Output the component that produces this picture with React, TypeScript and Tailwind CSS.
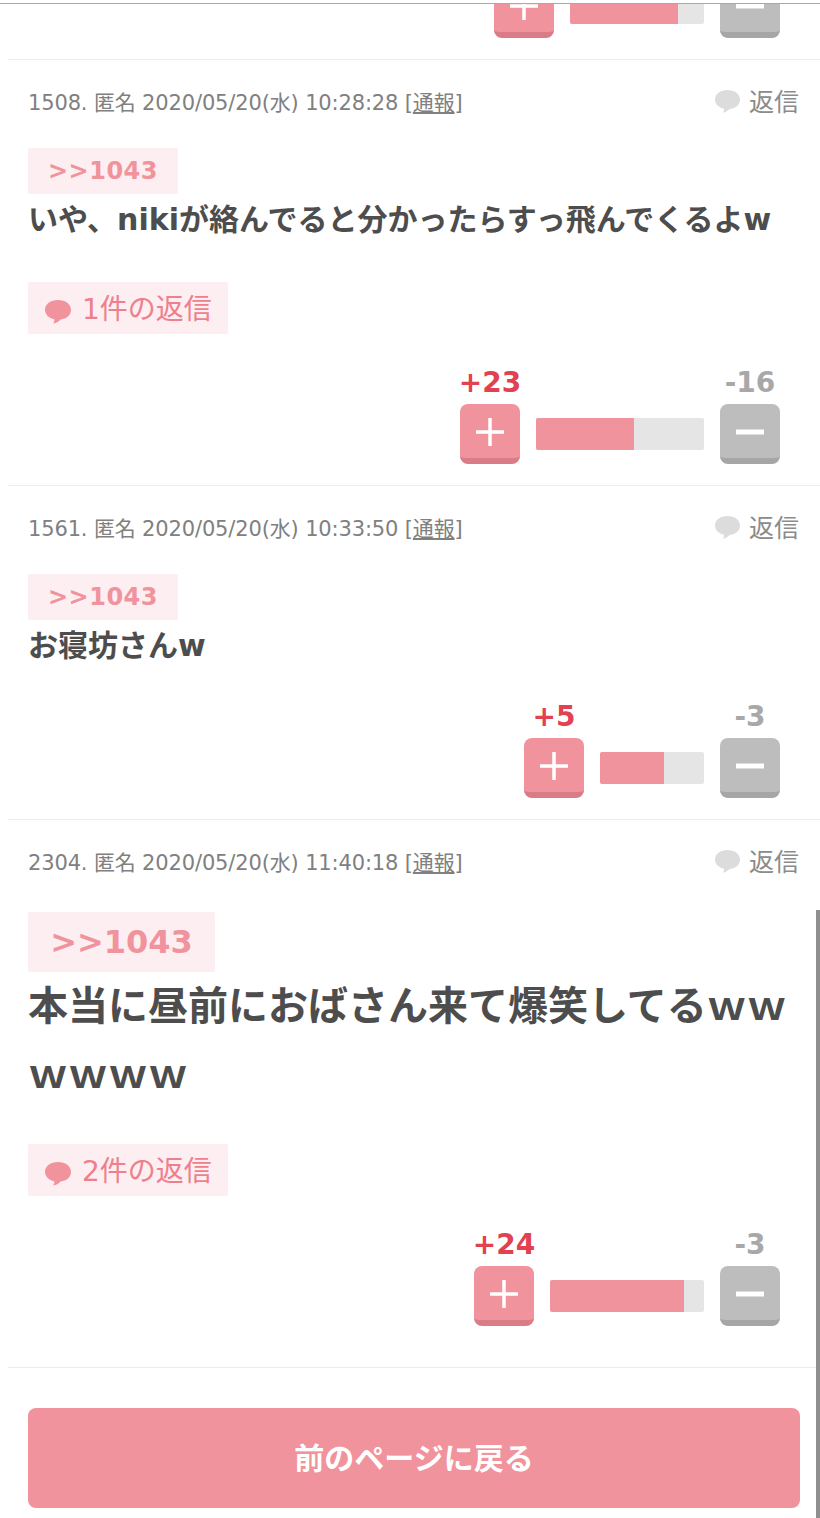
import React from 'react';

const FONT = "font-['DejaVu_Sans','Noto_Sans_CJK_JP',sans-serif]";

function Bubble({ className }: { className: string }) {
  return (
    <svg viewBox="0 0 28 26" className={className} fill="currentColor">
      <path d="M14 1C6.600 1 1 5.200 1 10.800c0 4.700 4 8.500 9.200 9.500.5 1.500-.2 3-1 4.400 2.800-.5 5.600-2.200 7.400-4.200C23 20 27 15.900 27 10.800 27 5.200 21.400 1 14 1z" />
    </svg>
  );
}

function Votes({ plus, minus, barWidth, fill }: { plus?: number; minus?: number; barWidth: number; fill: number }) {
  return (
    <div className="flex items-end justify-end pr-10">
      <div className="flex flex-col items-center w-[60px]">
        {plus !== undefined && (
          <span className="mb-[7px] h-[30px] leading-[32px] text-[28px] font-bold text-[#e2424f] whitespace-nowrap">+{plus}</span>
        )}
        <button className="flex h-[60px] w-[60px] shrink-0 items-center justify-center rounded-lg bg-[#f0939c] border-b-[6px] border-[#d97c87] pt-[2px]">
          <svg viewBox="0 0 28 28" className="w-7 h-7" stroke="#fff" strokeWidth="3.500">
            <path d="M14 0v28M0 14h28" />
          </svg>
        </button>
      </div>
      <div className="mx-4 mb-[14px] h-8 bg-[#e5e5e5] rounded-[2px] overflow-hidden" style={{ width: barWidth }}>
        <div className="h-full bg-[#f0939c]" style={{ width: fill }} />
      </div>
      <div className="flex flex-col items-center w-[60px]">
        {minus !== undefined && (
          <span className="mb-[7px] h-[30px] leading-[32px] text-[28px] font-bold text-[#a8a8a8] whitespace-nowrap">-{minus}</span>
        )}
        <button className="flex h-[60px] w-[60px] shrink-0 items-center justify-center rounded-lg bg-[#bdbdbd] border-b-[6px] border-[#a6a6a6] pt-[2px]">
          <svg viewBox="0 0 28 28" className="w-7 h-7" stroke="#fff" strokeWidth="5">
            <path d="M0 14h28" />
          </svg>
        </button>
      </div>
    </div>
  );
}

function Header({ no, time }: { no: number; time: string }) {
  return (
    <div className="mt-[21px] flex h-[44px] items-center justify-between">
      <div className="pt-px text-[21px] text-[#808080] whitespace-nowrap tracking-[-0.15px]">
        {no}. 匿名 2020/05/20(水) {time} [<span className="underline">通報</span>]
      </div>
      <div className="mr-px flex items-center text-[25px] text-[#8c8c8c]">
        <Bubble className="w-[27px] h-[25px] text-[#dcdcdc] mr-2 -mt-[3px] -ml-px" />
        返信
      </div>
    </div>
  );
}

function ReplyBadge({ label }: { label: string }) {
  return (
    <div className="mt-9 flex h-[52px] w-[200px] items-center rounded-[2px] bg-[#fdeef1] pl-4 pt-1 text-[28px] text-[#ee7f8c]">
      <Bubble className="w-[28px] h-[26px] text-[#f0939c] mr-[10px] mt-1" />
      {label}
    </div>
  );
}

export default function App() {
  return (
    <div className={`relative h-[1518px] overflow-hidden bg-white ${FONT}`}>
      <div className="h-[3px] bg-white" />
      <div className="h-px bg-[#aaaaaa]" />
      <div className="ml-2 h-[56px] overflow-hidden border-b border-[#ececec] flex flex-col justify-end pb-[21px]">
        <div className="-ml-2">
          <Votes barWidth={134} fill={108} />
        </div>
      </div>

      <section className="ml-2 border-b border-[#ececec] px-5 pb-[21px]">
        <Header no={1508} time="10:28:28" />
        <div className="mt-[23px] flex h-[46px] w-[150px] items-center justify-center rounded-[2px] bg-[#fdeef1] text-[24px] tracking-[0.5px] font-bold text-[#f0939c]">
          &gt;&gt;1043
        </div>
        <p className="h-[52px] text-[30px] font-bold leading-[52px] text-[#4d4d4d] whitespace-nowrap">
          いや、nikiが絡んでると分かったらすっ飛んでくるよw
        </p>
        <ReplyBadge label="1件の返信" />
        <div className="mt-[33px] -mx-5">
          <Votes plus={23} minus={16} barWidth={168} fill={98} />
        </div>
      </section>

      <section className="ml-2 border-b border-[#ececec] px-5 pb-[21px]">
        <Header no={1561} time="10:33:50" />
        <div className="mt-[23px] flex h-[46px] w-[150px] items-center justify-center rounded-[2px] bg-[#fdeef1] text-[24px] tracking-[0.5px] font-bold text-[#f0939c]">
          &gt;&gt;1043
        </div>
        <p className="h-[52px] text-[30px] font-bold leading-[52px] text-[#4d4d4d]">お寝坊さんw</p>
        <div className="mt-[29px] -mx-5">
          <Votes plus={5} minus={3} barWidth={104} fill={64} />
        </div>
      </section>

      <section className="ml-2 border-b border-[#ececec] px-5 pb-[41px]">
        <Header no={2304} time="11:40:18" />
        <div className="mt-[27px] flex h-[60px] w-[187px] items-center justify-center rounded-[2px] bg-[#fdeef1] text-[32px] font-bold text-[#f0939c]">
          &gt;&gt;1043
        </div>
        <p className="text-[40px] font-bold leading-[68px] text-[#4d4d4d] break-all">
          本当に昼前におばさん来て爆笑してるｗｗｗｗｗｗ
        </p>
        <ReplyBadge label="2件の返信" />
        <div className="mt-[33px] -mx-5">
          <Votes plus={24} minus={3} barWidth={154} fill={134} />
        </div>
      </section>

      <div className="mt-10 px-5 ml-2">
        <button className="flex h-[100px] w-[772px] items-center justify-center rounded-lg bg-[#f0939c] text-[30px] font-bold text-white">
          前のページに戻る
        </button>
      </div>

      <div className="absolute right-0 top-[910px] h-[608px] w-1 bg-[#8f8f8f]" />
    </div>
  );
}
